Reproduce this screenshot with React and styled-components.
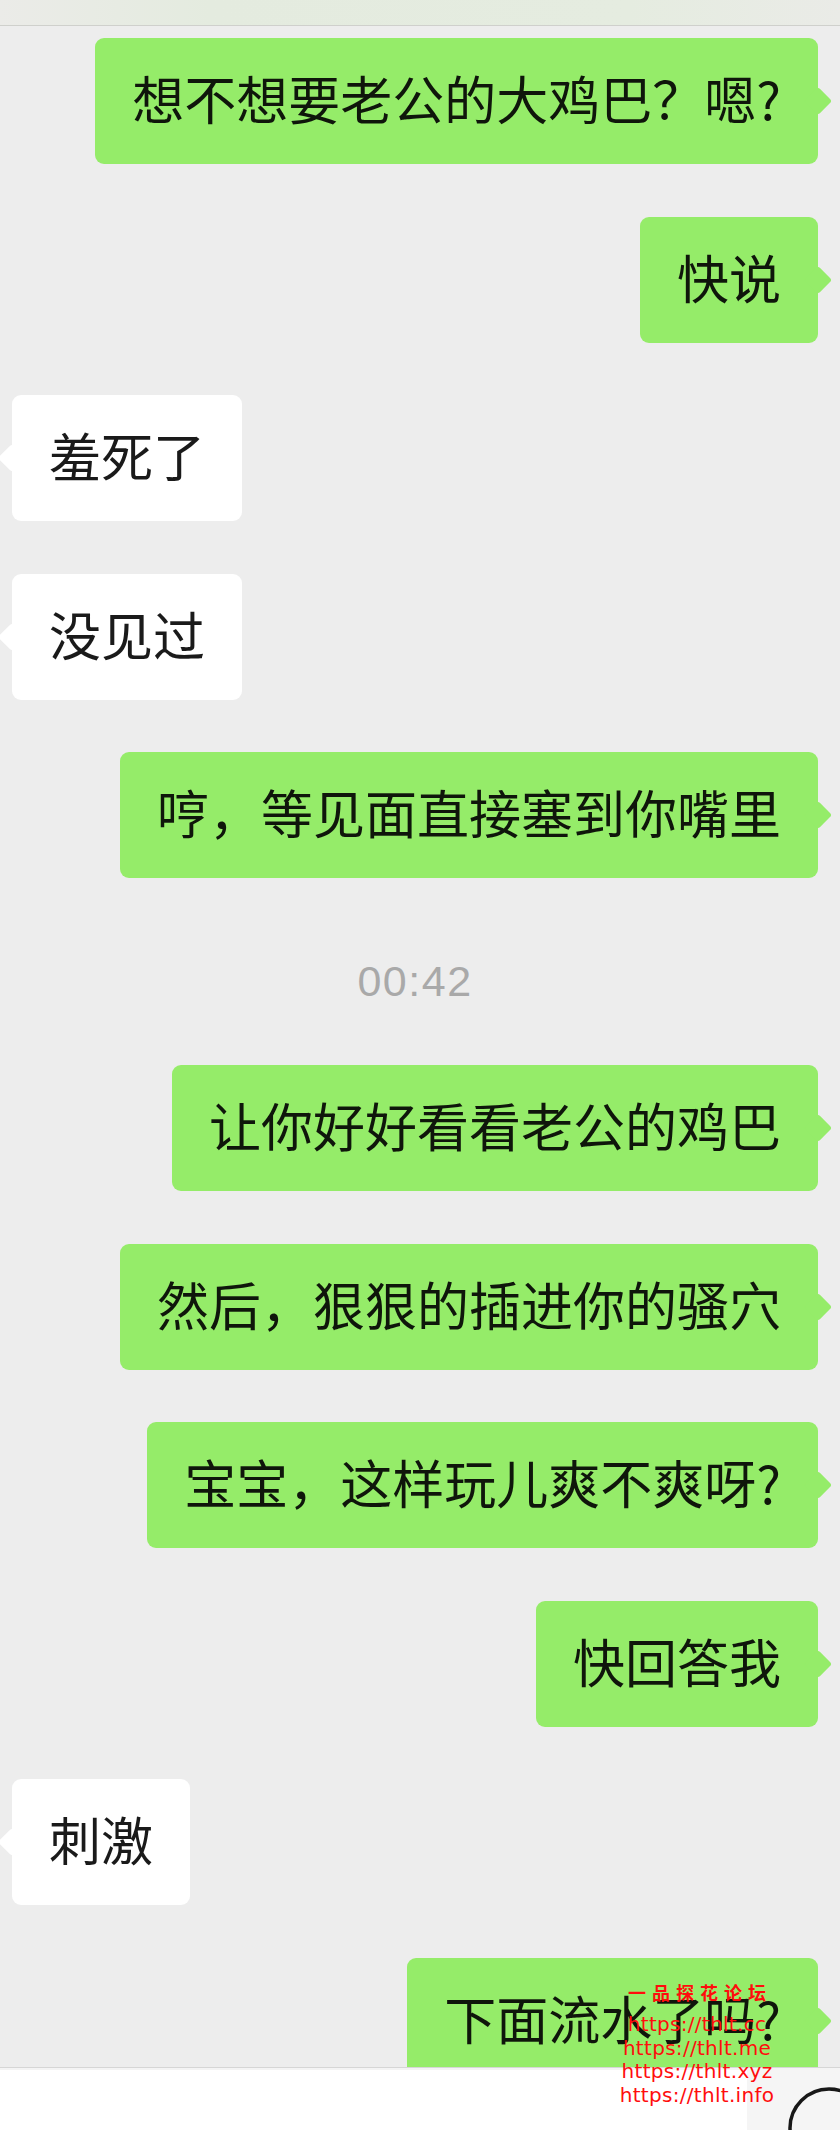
import React from 'react';
import styled, { createGlobalStyle } from 'styled-components';

const GlobalStyle = createGlobalStyle`
  html, body {
    margin: 0;
    padding: 0;
    background: #ededed;
  }
  * {
    box-sizing: border-box;
  }
`;

const Screen = styled.div`
  position: relative;
  width: 840px;
  height: 2130px;
  display: flex;
  flex-direction: column;
  overflow: hidden;
  background: #ededed;
  font-family: "Noto Sans CJK SC", "Noto Sans", sans-serif;
`;

const TopBar = styled.div`
  flex-shrink: 0;
  height: 26px;
  border-bottom: 1px solid #cfd0cc;
  background: linear-gradient(90deg, #ebebe8 0%, #e4ebdf 25%, #e5ece0 75%, #eaebe7 100%);
`;

const ChatArea = styled.div`
  flex: 1;
  min-height: 0;
  overflow: hidden;
  display: flex;
  flex-direction: column;
  gap: 52.5px;
  padding-top: 12px;
`;

const Row = styled.div`
  flex-shrink: 0;
  display: flex;
  justify-content: ${({ $mine }) => ($mine ? 'flex-end' : 'flex-start')};
  padding: ${({ $mine }) => ($mine ? '0 22px 0 0' : '0 0 0 12px')};
`;

const Bubble = styled.div`
  position: relative;
  padding: 24px 37px 30px;
  border-radius: 9px;
  font-size: 52px;
  line-height: 72px;
  white-space: nowrap;
  color: ${({ $mine }) => ($mine ? '#0f160b' : '#1a1a1a')};
  background: ${({ $mine }) => ($mine ? '#95ec69' : '#ffffff')};

  &::after {
    content: '';
    position: absolute;
    top: 50%;
    ${({ $mine }) => ($mine ? 'right: -10px;' : 'left: -10px;')}
    width: 20px;
    height: 20px;
    border-radius: 3px;
    background: inherit;
    transform: translateY(-50%) rotate(45deg);
  }
`;

const Timestamp = styled.div`
  flex-shrink: 0;
  height: 82px;
  padding: 28px 10px 0 0;
  text-align: center;
  font-family: "Liberation Sans", Arial, sans-serif;
  font-size: 43px;
  line-height: 44px;
  letter-spacing: 1.5px;
  color: #a9a9a9;
`;

const BottomBar = styled.div`
  flex-shrink: 0;
  height: 63px;
  border-top: 1px solid #d6d6d6;
  background: #f5f5f5;
  display: flex;
  flex-direction: column;
`;

const Strip = styled.div`
  height: 24px;
  background: #f4f4f4;
`;

const InputRow = styled.div`
  display: flex;
  height: 60px;
`;

const InputBox = styled.div`
  flex-shrink: 0;
  width: 747px;
  height: 60px;
  background: #ffffff;
`;

const EmojiIcon = styled.svg`
  flex-shrink: 0;
  margin: 16px 0 0 40px;
`;

const Watermark = styled.div`
  position: absolute;
  left: 612px;
  top: 1980px;
  width: 170px;
  text-align: center;
  color: #ff0d0d;
  pointer-events: none;
`;

const MarkTitle = styled.div`
  font-family: "Noto Sans CJK SC", sans-serif;
  font-weight: 700;
  font-size: 18px;
  line-height: 24px;
  letter-spacing: 6px;
  padding-left: 6px;
  margin-bottom: 9px;
`;

const MarkLink = styled.div`
  font-family: "DejaVu Sans", sans-serif;
  font-size: 20px;
  line-height: 23.5px;
  letter-spacing: 0.3px;
`;

const messages = [
  { mine: true, text: '想不想要老公的大鸡巴？嗯?' },
  { mine: true, text: '快说' },
  { mine: false, text: '羞死了' },
  { mine: false, text: '没见过' },
  { mine: true, text: '哼，等见面直接塞到你嘴里' },
  { time: '00:42' },
  { mine: true, text: '让你好好看看老公的鸡巴' },
  { mine: true, text: '然后，狠狠的插进你的骚穴' },
  { mine: true, text: '宝宝，这样玩儿爽不爽呀?' },
  { mine: true, text: '快回答我' },
  { mine: false, text: '刺激' },
  { mine: true, text: '下面流水了吗?' },
];

const links = ['https://thlt.cc', 'https://thlt.me', 'https://thlt.xyz', 'https://thlt.info'];

const App = () => {
  return (
    <>
      <GlobalStyle />
      <Screen>
        <TopBar />
        <ChatArea>
          {messages.map((msg, i) =>
            msg.time ? (
              <Timestamp key={i}>{msg.time}</Timestamp>
            ) : (
              <Row key={i} $mine={msg.mine}>
                <Bubble $mine={msg.mine}>{msg.text}</Bubble>
              </Row>
            )
          )}
        </ChatArea>
        <BottomBar>
          <Strip />
          <InputRow>
            <InputBox />
            <EmojiIcon width="84" height="84" viewBox="0 0 84 84">
              <circle cx="42" cy="42" r="39" fill="none" stroke="#181818" strokeWidth="3.5" />
            </EmojiIcon>
          </InputRow>
        </BottomBar>
        <Watermark>
          <MarkTitle>一品探花论坛</MarkTitle>
          {links.map((link) => (
            <MarkLink key={link}>{link}</MarkLink>
          ))}
        </Watermark>
      </Screen>
    </>
  );
};

export default App;
